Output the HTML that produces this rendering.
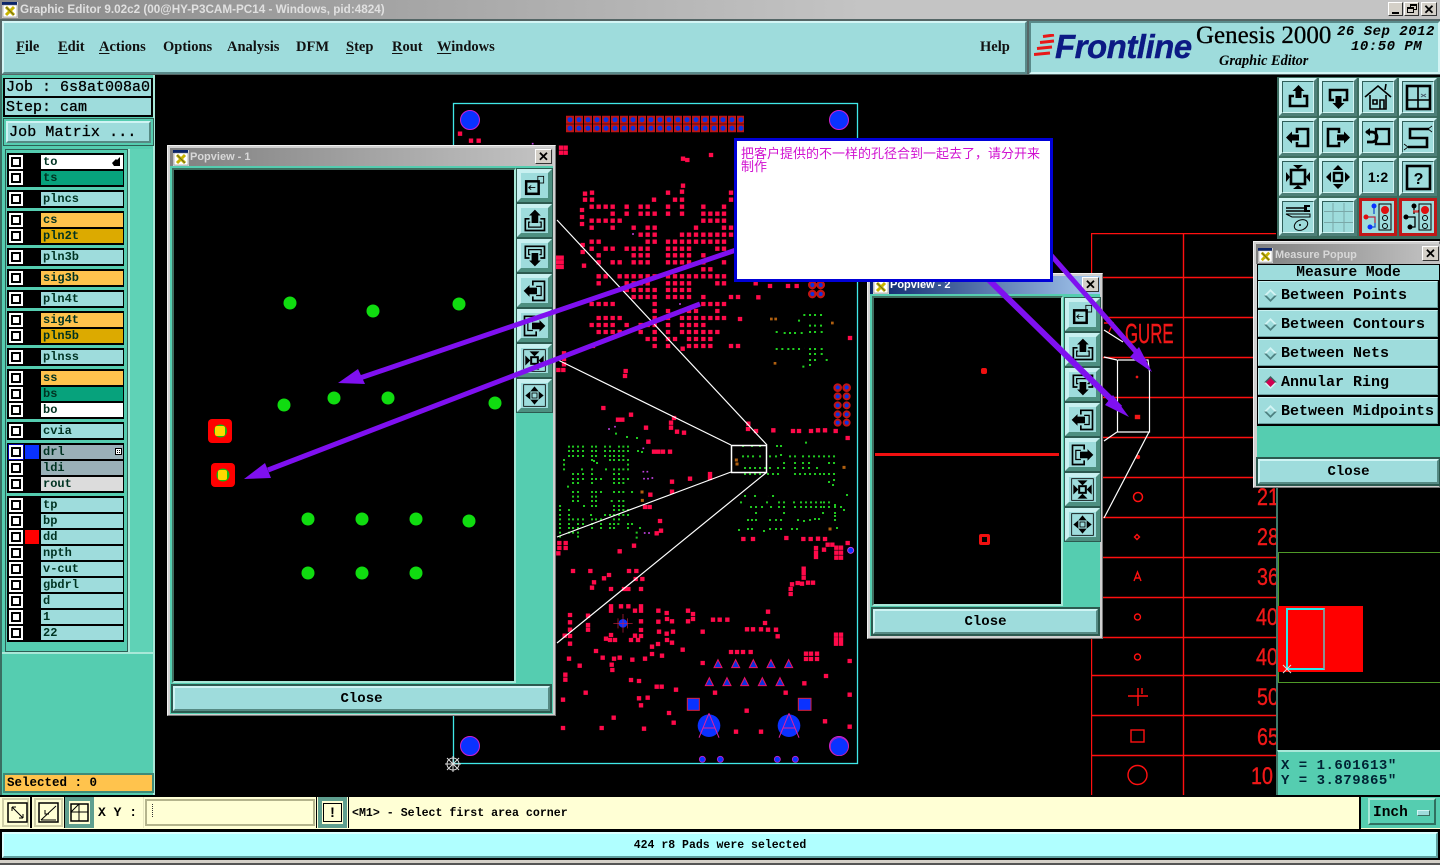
<!DOCTYPE html>
<html><head><meta charset="utf-8"><title>Graphic Editor</title>
<style>
html,body{margin:0;padding:0;background:#000}
#r{position:relative;width:1440px;height:865px;overflow:hidden;background:#000;font-family:"Liberation Mono",monospace;color:#000}
#r div,#r span,#r svg{position:absolute;box-sizing:border-box}
.b{background:#9edcdc;border:2px solid;border-color:#cff4f4 #568a84 #568a84 #cff4f4}
.m{font:bold 14.5px/18px "Liberation Serif",serif;top:38px;white-space:nowrap;color:#111}
.m u{text-underline-offset:2px}
.t{font:bold 15px/18px "Liberation Mono",monospace;white-space:pre}
.lb{background:#000;left:7px;width:117px}
.ck{left:9px;width:14px;height:14px;background:#fff}
.ck:after{content:"";position:absolute;left:2px;top:2px;width:10px;height:10px;border:2px solid #000;background:#fff;box-sizing:border-box}
.c{left:41px;width:82px;height:14px;background:#9edcdc;font:bold 12px/15px "Liberation Mono",monospace;padding-left:2px;color:#032}
.o{background:#ffc34d}.d{background:#dcaa00}.g{background:#07a27c}.w{background:#fff}.s{background:#9ab0b8}.y{background:#dcdcdc}
.tool{width:38px;height:38px;background:#9edcdc;border:3px solid;border-color:#d3f5f5 #4d7f78 #4d7f78 #d3f5f5}
.tool:before{content:"";position:absolute;left:0;top:0;width:32px;height:32px;border:1px solid;border-color:#2f5f5a #d3f5f5 #d3f5f5 #2f5f5a;box-sizing:border-box}
.tool svg{left:1px;top:1px;width:30px;height:30px}
.pop{background:#d0d0d0;border:1px solid #f0f0f0;border-right-color:#777;border-bottom-color:#777}
.ti{font:bold 11px/16px "Liberation Sans",sans-serif;color:#d8d8d8;white-space:nowrap}
.x{width:17px;height:15px;background:#d4d0c8;border:1px solid;border-color:#fff #333 #333 #fff;font:bold 13px/13px "Liberation Sans",sans-serif;text-align:center;color:#000}
.pb{width:35px;height:33px;background:#9edcdc;border:4px solid;border-color:#c8f0f0 #4d8f80 #4d8f80 #c8f0f0;outline:1px solid #2c5a50}
.pb svg{left:1px;top:0;width:25px;height:25px}
.row{left:1258px;width:180px;height:27px;background:#9edcdc;border:1px solid;border-color:#c8f0f0 #6ba0a0 #6ba0a0 #c8f0f0}
.row svg{left:4px;top:6px;width:15px;height:15px}
.row span{left:22px;top:5px}
</style></head><body>
<div id="r">

<svg width="0" height="0" style="left:0;top:0">
<defs>
<symbol id="up" viewBox="0 0 30 30"><path d="M11 14H7v10h17V14h-4" fill="none" stroke="#000" stroke-width="2.600"/><path d="M15.500 3l6 6h-3v7h-6V9h-3z"/></symbol>
<symbol id="dn" viewBox="0 0 30 30"><path d="M11 18H7V8h17v10h-4" fill="none" stroke="#000" stroke-width="2.600"/><path d="M15.500 27l-6-6h3v-7h6v7h3z"/></symbol>
<symbol id="lf" viewBox="0 0 30 30"><path d="M14 11V7h11v17H14v-4" fill="none" stroke="#000" stroke-width="2.600"/><path d="M3 15.500l6-6v3h7v6H9v3z"/></symbol>
<symbol id="rt" viewBox="0 0 30 30"><path d="M16 11V7H5v17h11v-4" fill="none" stroke="#000" stroke-width="2.600"/><path d="M27 15.500l-6-6v3h-7v6h7v3z"/></symbol>
<symbol id="fit" viewBox="0 0 30 30"><rect x="8" y="8" width="14" height="14" fill="none" stroke="#000" stroke-width="2.600"/><path d="M15 7l-5-4h10zM15 23l-5 4h10zM7 15l-4-5v10zM23 15l4-5v10z"/></symbol>
<symbol id="pan" viewBox="0 0 30 30"><rect x="11" y="11" width="8" height="8" fill="none" stroke="#000" stroke-width="2.400"/><path d="M15 3l5 5H10zM15 27l5-5H10zM3 15l5-5v10zM27 15l-5-5v10z"/></symbol>
<symbol id="back" viewBox="0 0 30 30"><rect x="5" y="10" width="15" height="15" fill="none" stroke="#000" stroke-width="3"/><path d="M16 17.500H9M11 15l-3 2.500 3 2.500" fill="none" stroke="#000"/><rect x="19" y="4" width="7" height="8" fill="none" stroke="#000"/></symbol>
<symbol id="pup" viewBox="0 0 30 30"><path d="M9 13H4v14h23V13h-5" fill="none" stroke="#000" stroke-width="2"/><path d="M10 17H8v6h15v-6h-2" fill="none" stroke="#000" stroke-width="1.500"/><path d="M15.500 2l7 7h-3v9h-8V9h-3z"/></symbol>
<symbol id="pdn" viewBox="0 0 30 30"><path d="M9 18H4V4h23v14h-5" fill="none" stroke="#000" stroke-width="2"/><path d="M10 14H8V8h15v6h-2" fill="none" stroke="#000" stroke-width="1.500"/><path d="M15.500 28l-7-7h3v-9h8v9h3z"/></symbol>
<symbol id="plf" viewBox="0 0 30 30"><path d="M13 9V4h14v23H13v-5" fill="none" stroke="#000" stroke-width="2"/><path d="M17 10h6v11h-6" fill="none" stroke="#000" stroke-width="1.500"/><path d="M2 15.500l7-7v3h9v8H9v3z"/></symbol>
<symbol id="prt" viewBox="0 0 30 30"><path d="M17 9V4H3v23h14v-5" fill="none" stroke="#000" stroke-width="2"/><path d="M13 10H7v11h6" fill="none" stroke="#000" stroke-width="1.500"/><path d="M28 15.500l-7-7v3h-9v8h9v3z"/></symbol>
<symbol id="pfit" viewBox="0 0 30 30"><rect x="2" y="2" width="26" height="26" fill="none" stroke="#000"/><rect x="11" y="11" width="8" height="8" fill="none" stroke="#000" stroke-width="2.400"/><path d="M15 10l-6-6h12zM15 20l-6 6h12zM10 15l-6-6v12zM20 15l6-6v12z"/></symbol>
<symbol id="ppan" viewBox="0 0 30 30"><rect x="2" y="2" width="26" height="26" fill="none" stroke="#000"/><rect x="12" y="12" width="6" height="6" fill="none" stroke="#000"/><path d="M15 4l5 6H10zM15 26l5-6H10zM4 15l6-5v10zM26 15l-6-5v10z"/></symbol>
<symbol id="xi" viewBox="0 0 16 16"><rect width="16" height="16" fill="#d8d8d8"/><rect width="15" height="3" fill="#0a246a"/><rect x="1" y="3" width="14" height="12" fill="#fff" stroke="#777" stroke-width=".5"/><path d="M4 5l8 8M12 5l-8 8" stroke="#c8b400" stroke-width="3"/><path d="M4 5l8 8" stroke="#6a6a20"/></symbol>
<symbol id="dia" viewBox="0 0 15 15"><path d="M7.500 1L14 7.500H1z" fill="#d4f4f4"/><path d="M1 7.500L7.500 14 14 7.500z" fill="#4d8080"/><path d="M7.500 3.500l4 4-4 4-4-4z" fill="#9edcdc"/></symbol>
</defs></svg>

<!-- Title bar -->
<div style="left:0;top:0;width:1440px;height:19px;background:linear-gradient(90deg,#8a8a8a,#c4c4c4 60%,#c4c4c4)"></div>
<svg style="left:2px;top:2px;width:16px;height:16px"><use href="#xi"/></svg>
<div style="left:20px;top:2px;font:bold 11.7px/16px 'Liberation Sans',sans-serif;color:#e0e0e0;white-space:nowrap">Graphic Editor 9.02c2 (00@HY-P3CAM-PC14 - Windows, pid:4824)</div>
<div class="x" style="left:1388px;top:2px;width:15px;height:14px"><span style="left:3px;top:9px;width:7px;height:2px;background:#000"></span></div>
<div class="x" style="left:1404px;top:2px;width:15px;height:14px"><span style="left:5px;top:1px;width:7px;height:6px;border:1px solid #000;border-top-width:2px"></span><span style="left:2px;top:4px;width:7px;height:6px;border:1px solid #000;border-top-width:2px;background:#d4d0c8"></span></div>
<div class="x" style="left:1421px;top:2px;width:16px;height:14px">✕</div>

<!-- Menu -->
<div style="left:0;top:19px;width:1440px;height:56px;background:#566"></div>
<div class="b" style="left:2px;top:21px;width:1025px;height:53px;border-color:#d3f5f5 #5a8a8a #5a8a8a #d3f5f5"></div>
<div class="b" style="left:1029px;top:21px;width:411px;height:53px;border-color:#5a8a8a #d3f5f5 #d3f5f5 #5a8a8a"></div>
<div class="m" style="left:16px"><u>F</u>ile</div>
<div class="m" style="left:58px"><u>E</u>dit</div>
<div class="m" style="left:99px"><u>A</u>ctions</div>
<div class="m" style="left:163px">Options</div>
<div class="m" style="left:227px">Analysis</div>
<div class="m" style="left:296px">DFM</div>
<div class="m" style="left:346px"><u>S</u>tep</div>
<div class="m" style="left:392px"><u>R</u>out</div>
<div class="m" style="left:437px"><u>W</u>indows</div>
<div class="m" style="left:980px">Help</div>

<!-- Logo -->
<svg style="left:1034px;top:34px;width:24px;height:26px"><path d="M9 2.500L20 1M6 8.500L20 7M3 14.500L18 13M0 20.500L16 19" stroke="#e81818" stroke-width="3"/></svg>
<div style="left:1055px;top:27px;font:italic bold 33px/40px 'Liberation Sans',sans-serif;color:#0c1a84;letter-spacing:-.5px;white-space:nowrap;-webkit-text-stroke:.4px #0c1a84">Frontline</div>
<div style="left:1196px;top:20px;font:25px/32px 'Liberation Serif',serif;white-space:nowrap;-webkit-text-stroke:.3px #000">Genesis 2000</div>
<div style="left:1219px;top:53px;font:italic bold 14.3px/16px 'Liberation Serif',serif;white-space:nowrap">Graphic Editor</div>
<div style="left:1337px;top:24px;font:italic bold 14px/17px 'Liberation Mono',monospace;white-space:pre;letter-spacing:.5px">26 Sep 2012</div>
<div style="left:1351px;top:39px;font:italic bold 14px/17px 'Liberation Mono',monospace;white-space:pre;letter-spacing:.5px">10:50 PM</div>

<!-- Left panel -->
<div style="left:0;top:75px;width:155px;height:722px;background:#55cdb0;border-right:2px solid #a8e8d8;border-left:2px solid #3a6e62"></div>
<div style="left:3px;top:78px;width:150px;height:39px;background:#000"></div>
<div style="left:5px;top:79px;width:146px;height:17px;background:#9edcdc"></div>
<div style="left:5px;top:98px;width:146px;height:17px;background:#9edcdc"></div>
<div class="t" style="left:6px;top:79px;line-height:17px;font-weight:normal;-webkit-text-stroke:.3px #000">Job : 6s8at008a0</div>
<div class="t" style="left:6px;top:99px;line-height:17px;font-weight:normal;-webkit-text-stroke:.3px #000">Step: cam</div>
<div style="left:3px;top:118px;width:151px;height:28px;background:#55cdb0;border:1px solid #2e5e54"></div>
<div class="b" style="left:6px;top:121px;width:145px;height:22px"></div>
<div class="t" style="left:9px;top:124px;letter-spacing:.1px;font-weight:normal;-webkit-text-stroke:.3px #000">Job Matrix ...</div>
<div style="left:5px;top:149px;width:123px;height:503px;background:#55cdb0;border:1px solid #2e5e54"></div>
<div style="left:128px;top:149px;width:24px;height:503px;background:#5fd2b6;border-left:2px solid #a8e8d8"></div>
<div style="left:2px;top:652px;width:151px;height:2px;background:#a8e8d8"></div>

<!-- Layer groups -->
<div class="lb" style="top:153px;height:34px"></div>
<div class="lb" style="top:190px;height:18px"></div>
<div class="lb" style="top:211px;height:34px"></div>
<div class="lb" style="top:248px;height:18px"></div>
<div class="lb" style="top:269px;height:18px"></div>
<div class="lb" style="top:290px;height:18px"></div>
<div class="lb" style="top:311px;height:34px"></div>
<div class="lb" style="top:348px;height:18px"></div>
<div class="lb" style="top:369px;height:50px"></div>
<div class="lb" style="top:422px;height:18px"></div>
<div class="lb" style="top:443px;height:50px"></div>
<div class="lb" style="top:496px;height:146px"></div>

<div class="ck" style="top:155px"></div><div class="c w" style="top:155px">to<svg style="left:70px;top:2px;width:10px;height:10px"><path d="M1 6l4-4 1 1 3-3v9H3z"/></svg></div>
<div class="ck" style="top:171px"></div><div class="c g" style="top:171px">ts</div>
<div class="ck" style="top:192px"></div><div class="c" style="top:192px">plncs</div>
<div class="ck" style="top:213px"></div><div class="c o" style="top:213px">cs</div>
<div class="ck" style="top:229px"></div><div class="c d" style="top:229px">pln2t</div>
<div class="ck" style="top:250px"></div><div class="c" style="top:250px">pln3b</div>
<div class="ck" style="top:271px"></div><div class="c o" style="top:271px">sig3b</div>
<div class="ck" style="top:292px"></div><div class="c" style="top:292px">pln4t</div>
<div class="ck" style="top:313px"></div><div class="c o" style="top:313px">sig4t</div>
<div class="ck" style="top:329px"></div><div class="c d" style="top:329px">pln5b</div>
<div class="ck" style="top:350px"></div><div class="c" style="top:350px">plnss</div>
<div class="ck" style="top:371px"></div><div class="c o" style="top:371px">ss</div>
<div class="ck" style="top:387px"></div><div class="c g" style="top:387px">bs</div>
<div class="ck" style="top:403px"></div><div class="c w" style="top:403px">bo</div>
<div class="ck" style="top:424px"></div><div class="c" style="top:424px">cvia</div>
<div style="left:8px;top:444px;width:16px;height:16px;background:#0000a8"></div>
<div class="ck" style="top:445px"></div>
<div style="left:25px;top:445px;width:14px;height:14px;background:#0a32ff"></div>
<div class="c s" style="top:445px">drl<svg style="left:74px;top:3px;width:7px;height:7px"><rect x=".5" y=".5" width="6" height="6" fill="#fff" stroke="#000"/><path d="M2 2h1v1H2zM4 2h1v1H4zM2 4h1v1H2zM4 4h1v1H4z"/></svg></div>
<div class="ck" style="top:461px"></div><div class="c s" style="top:461px">ldi</div>
<div class="ck" style="top:477px"></div><div class="c y" style="top:477px">rout</div>
<div class="ck" style="top:498px"></div><div class="c" style="top:498px">tp</div>
<div class="ck" style="top:514px"></div><div class="c" style="top:514px">bp</div>
<div class="ck" style="top:530px"></div><div style="left:25px;top:530px;width:14px;height:14px;background:#f00"></div><div class="c" style="top:530px">dd</div>
<div class="ck" style="top:546px"></div><div class="c" style="top:546px">npth</div>
<div class="ck" style="top:562px"></div><div class="c" style="top:562px">v-cut</div>
<div class="ck" style="top:578px"></div><div class="c" style="top:578px">gbdrl</div>
<div class="ck" style="top:594px"></div><div class="c" style="top:594px">d</div>
<div class="ck" style="top:610px"></div><div class="c" style="top:610px">1</div>
<div class="ck" style="top:626px"></div><div class="c" style="top:626px">22</div>

<div style="left:3px;top:773px;width:151px;height:20px;background:#ffc34d;border:2px solid #3f8a78;font:bold 12.5px/16px 'Liberation Mono',monospace;padding-left:2px;white-space:pre">Selected : 0</div>

<!-- Canvas -->
<svg style="left:155px;top:75px;width:1122px;height:722px" viewBox="155 75 1122 722">
<defs><clipPath id="cl"><rect x="1091" y="233" width="185" height="562"/></clipPath></defs>
<rect x="453.500" y="103.500" width="404" height="660" fill="none" stroke="#40e8e8" stroke-width="1.300"/>
<g fill="#0a32ff" stroke="#d020d0" stroke-width="1">
<circle cx="470" cy="120" r="9.500"/><circle cx="839" cy="120" r="9.500"/><circle cx="470" cy="746" r="9.500"/><circle cx="839" cy="746" r="9.500"/>
</g>
<!-- top connector -->
<path d="M566 119.700H744M566 128.300H744" stroke="#c01414" stroke-width="8" stroke-dasharray="8 1"/>
<path d="M570 119.700H742M570 128.300H742" stroke="#0a32e0" stroke-width="5" stroke-dasharray="0 9" stroke-linecap="round"/>
<!-- zoom8 pads -->
<g transform="translate(450,95) scale(.33333)" fill="none">
<path stroke="#ff0a4a" stroke-width="13" stroke-linecap="square" d="M425 335h.1M446 335h.1M467 335h.1M488 335h.1M530 335h.1M572 335h.1M593 335h.1M612 314h.1M654 335h.1M696 335h.1M760 335h.1M822 335h.1
M488 356h.1M530 356h.1M572 356h.1M593 356h.1M614 356h.1M654 356h.1M696 356h.1M760 356h.1M781 356h.1M802 356h.1M822 356h.1
M425 377h.1M446 377h.1M467 377h.1M488 377h.1M509 377h.1M760 377h.1M781 377h.1M802 377h.1M822 377h.1
M425 398h.1M488 398h.1M551 398h.1M593 398h.1M614 398h.1M738 398h.1M822 398h.1M843 398h.1
M572 419h.1M593 419h.1M614 419h.1M696 419h.1M717 419h.1M738 419h.1M760 419h.1M781 419h.1M802 419h.1M822 419h.1M843 419h.1
M425 440h.1M446 440h.1M593 440h.1M614 440h.1M654 440h.1M675 440h.1M696 440h.1M717 440h.1M738 440h.1M760 440h.1M781 440h.1M802 440h.1M822 440h.1
M425 461h.1M467 461h.1M488 461h.1M530 461h.1M551 461h.1M572 461h.1M593 461h.1M654 461h.1M675 461h.1M696 461h.1M717 461h.1M802 461h.1M822 461h.1
M446 481h.1M551 481h.1M572 481h.1M593 481h.1M654 481h.1M675 481h.1M696 481h.1M717 481h.1M760 481h.1
M446 502h.1M488 502h.1M509 502h.1M551 502h.1M572 502h.1M593 502h.1M654 502h.1M675 502h.1M696 502h.1M717 502h.1M760 502h.1M822 502h.1
M760 523h.1M781 523h.1
M446 544h.1M467 544h.1M509 544h.1M530 544h.1M551 544h.1M572 544h.1M593 544h.1M614 544h.1M654 544h.1M675 544h.1M696 544h.1M717 544h.1M738 544h.1M760 544h.1M781 544h.1M802 544h.1M822 544h.1
M446 565h.1M530 565h.1M551 565h.1M572 565h.1M593 565h.1M654 565h.1M675 565h.1M696 565h.1M717 565h.1M802 565h.1M822 565h.1
M530 585h.1M551 585h.1M572 585h.1M593 585h.1M614 585h.1M654 585h.1M675 585h.1M696 585h.1M717 585h.1
M551 606h.1M572 606h.1M593 606h.1M614 606h.1M654 606h.1M675 606h.1M696 606h.1M717 606h.1M760 606h.1M843 606h.1M864 606h.1
M425 627h.1M446 627h.1M467 627h.1M488 627h.1M614 627h.1M760 627h.1M781 627h.1M802 627h.1M822 627h.1
M614 648h.1M654 648h.1M696 648h.1M717 648h.1M738 648h.1M802 648h.1
M446 669h.1M467 669h.1M488 669h.1M509 669h.1M614 669h.1M654 669h.1M696 669h.1M717 669h.1M738 669h.1M760 669h.1M781 669h.1M802 669h.1M822 669h.1
M425 690h.1M446 690h.1M467 690h.1M488 690h.1M530 690h.1M572 690h.1M593 690h.1M614 690h.1M654 690h.1M696 690h.1M717 690h.1M738 690h.1M760 690h.1
M446 711h.1M467 711h.1M488 711h.1M509 711h.1M572 711h.1M614 711h.1M654 711h.1M696 711h.1M717 711h.1M738 711h.1M760 711h.1M781 711h.1M802 711h.1
M593 732h.1M614 732h.1M654 732h.1M675 732h.1M717 732h.1M738 732h.1M760 732h.1M781 732h.1
M614 753h.1M654 753h.1M717 753h.1M738 753h.1M760 753h.1M781 753h.1M843 753h.1M864 753h.1
M870 672h.1M925 607h.1M917 565h.1M960 573h.1M1014 573h.1M1040 573h.1M1200 729h.1
M30 116h.1M63 137h.1M86 137h.1M333 158h.1M347 158h.1M333 173h.1M347 173h.1M699 191h.1M712 195h.1M783 180h.1M699 272h.1M696 290h.1M405 296h.1M426 293h.1M405 314h.1M426 314h.1M654 293h.1M675 314h.1M696 314h.1M843 293h.1M843 314h.1M396 345h.1M396 366h.1M396 387h.1M398 450h.1M398 471h.1M402 512h.1M323 488h.1M335 488h.1M323 502h.1M335 502h.1M323 516h.1M335 516h.1M342 775h.1M342 792h.1M342 808h.1M325 825h.1M340 825h.1M527 828h.1M525 843h.1M698 761h.1M429 753h.1"/>
<path stroke="#20d020" stroke-width="6" stroke-linecap="square" d="M1063 660h.1M1080 660h.1M1095 660h.1M1113 660h.1M1047 677h.1M1080 692h.1M1095 692h.1M1113 692h.1M980 711h.1M1004 714h.1M1020 714h.1M1035 714h.1M1055 714h.1M1080 711h.1M1095 711h.1M1115 711h.1M980 762h.1M997 762h.1M1015 762h.1M1030 762h.1M1047 762h.1M1080 762h.1M1095 762h.1M1115 762h.1M1080 777h.1M1095 777h.1M1115 777h.1M1080 795h.1M1095 795h.1M1130 795h.1M1080 810h.1M1060 815h.1"/>
<path stroke="#b06010" stroke-width="8" stroke-linecap="square" d="M964 672h.1M977 672h.1M975 805h.1M1147 684h.1"/>
<path stroke="#e8d020" stroke-width="5" d="M1080 677h.1M1115 692h.1M1064 760h.1"/>
<path stroke="#c040e0" stroke-width="5" stroke-linecap="square" d="M248 146h.1M549 417h.1M690 627h.1"/>
<path stroke="#c01414" stroke-width="26" stroke-linecap="round" d="M1087 570h.1M1112 570h.1M1087 597h.1M1112 597h.1M1163 878h.1M1190 878h.1"/>
<path stroke="#0a32e0" stroke-width="12" stroke-linecap="round" d="M1087 570h.1M1112 570h.1M1087 597h.1M1112 597h.1M1163 878h.1M1190 878h.1"/>
</g>
<!-- zoom9 -->
<g transform="translate(550,380) scale(.33333)" fill="none">
<path stroke="#ff0a4a" stroke-width="13" stroke-linecap="square" d="M160 84h.1M243 104h.1M204 119h.1M217 119h.1M288 143h.1M363 128h.1M363 143h.1M372 114h.1M381 155h.1M402 158h.1M595 131h.1M594 147h.1M618 153h.1M670 151h.1M729 153h.1M747 153h.1M783 153h.1M804 151h.1M825 151h.1M857 153h.1M893 174h.1M295 185h.1M312 215h.1M325 215h.1M339 215h.1M360 215h.1M480 282h.1M480 294h.1M420 296h.1M366 305h.1M366 335h.1M301 344h.1M285 381h.1M299 381h.1M330 423h.1M333 452h.1M320 460h.1M252 497h.1M209 514h.1M580 477h.1M609 477h.1M709 474h.1M760 477h.1M782 477h.1M804 476h.1M825 477h.1M833 494h.1M847 494h.1M859 503h.1M873 503h.1M859 518h.1M873 518h.1M859 533h.1M873 533h.1M798 504h.1M798 518h.1M798 531h.1M822 509h.1M893 489h.1M28 489h.1M47 489h.1M28 504h.1M47 504h.1M25 520h.1M69 573h.1M121 573h.1M177 585h.1M162 595h.1M132 607h.1M126 623h.1M183 627h.1M237 573h.1M259 573h.1M277 597h.1M235 627h.1M273 627h.1M257 597h.1M222 627h.1M761 566h.1M761 579h.1M761 593h.1M726 613h.1M743 609h.1M756 611h.1M774 608h.1M789 608h.1M722 627h.1M722 642h.1M183 679h.1M213 679h.1M235 679h.1M273 679h.1M183 692h.1M255 692h.1M273 692h.1M325 692h.1M350 699h.1M351 717h.1M366 724h.1M414 692h.1M429 702h.1M429 717h.1M414 724h.1M489 719h.1M509 719h.1M532 719h.1M654 695h.1M645 729h.1M591 748h.1M609 748h.1M633 748h.1M654 749h.1M678 749h.1M683 769h.1M60 705h.1M114 707h.1M60 727h.1M114 735h.1M114 749h.1M60 749h.1M60 768h.1M44 767h.1M60 791h.1M273 724h.1M325 725h.1M273 750h.1M327 755h.1M369 755h.1M350 761h.1M183 765h.1M255 767h.1M273 768h.1M168 776h.1M180 780h.1M195 780h.1M243 780h.1M264 780h.1M351 780h.1M366 788h.1M324 792h.1M306 800h.1M306 822h.1M336 827h.1M398 809h.1M458 755h.1M138 813h.1M158 833h.1M192 836h.1M209 833h.1M247 839h.1M285 836h.1M57 836h.1M89 857h.1M185 854h.1M187 870h.1M46 884h.1M46 899h.1M243 900h.1M267 903h.1M320 920h.1M335 920h.1M378 929h.1M107 938h.1M39 959h.1M267 955h.1M293 953h.1M273 976h.1M357 999h.1M371 1028h.1M191 1013h.1M39 1044h.1M155 1044h.1M282 1046h.1M458 849h.1M543 816h.1M561 816h.1M579 816h.1M602 816h.1M495 938h.1M590 992h.1M558 1055h.1M633 1055h.1M707 938h.1M763 910h.1M828 888h.1M899 843h.1M899 944h.1M825 1024h.1M899 1040h.1M768 821h.1M783 821h.1M801 821h.1M768 837h.1M783 837h.1M801 837h.1M858 764h.1M873 764h.1M858 778h.1M873 778h.1M858 791h.1M873 791h.1"/>
<path stroke="#20c820" stroke-width="6" stroke-linecap="square" d="M57 200h.1M69 200h.1M84 200h.1M99 200h.1M126 200h.1M138 200h.1M165 200h.1M180 200h.1M207 200h.1M220 200h.1M234 200h.1M231 171h.1M261 174h.1M198 161h.1M57 213h.1M69 213h.1M84 213h.1M99 213h.1M126 213h.1M138 213h.1M165 213h.1M180 213h.1M192 213h.1M207 213h.1M220 213h.1M234 213h.1M264 213h.1M276 216h.1M57 228h.1M69 228h.1M84 228h.1M99 228h.1M126 228h.1M138 228h.1M165 228h.1M180 228h.1M192 228h.1M207 228h.1M220 228h.1M42 240h.1M126 240h.1M132 243h.1M180 240h.1M192 240h.1M207 240h.1M220 240h.1M234 240h.1M42 254h.1M141 249h.1M234 254h.1M42 268h.1M96 268h.1M126 268h.1M168 268h.1M192 268h.1M207 268h.1M220 268h.1M234 268h.1M69 282h.1M84 282h.1M99 282h.1M126 282h.1M192 282h.1M207 282h.1M69 297h.1M84 297h.1M99 297h.1M126 297h.1M138 297h.1M153 297h.1M192 297h.1M207 297h.1M220 297h.1M234 297h.1M69 309h.1M84 309h.1M126 309h.1M192 309h.1M207 309h.1M220 309h.1M54 320h.1M69 336h.1M84 336h.1M126 336h.1M138 336h.1M153 336h.1M192 336h.1M207 336h.1M220 336h.1M246 336h.1M69 350h.1M84 350h.1M126 350h.1M138 350h.1M69 363h.1M84 363h.1M126 363h.1M138 363h.1M185 363h.1M207 363h.1M220 363h.1M30 378h.1M102 378h.1M126 378h.1M138 378h.1M192 378h.1M207 378h.1M220 378h.1M30 390h.1M57 390h.1M192 390h.1M207 390h.1M220 390h.1M234 390h.1M30 405h.1M57 405h.1M123 405h.1M165 405h.1M180 405h.1M192 405h.1M207 405h.1M220 405h.1M234 405h.1M30 418h.1M57 418h.1M69 418h.1M84 418h.1M99 418h.1M126 418h.1M138 418h.1M153 418h.1M192 418h.1M207 418h.1M30 432h.1M57 432h.1M84 432h.1M99 432h.1M126 432h.1M153 432h.1M180 432h.1M192 432h.1M205 432h.1M234 432h.1M246 432h.1M30 444h.1M57 444h.1M69 444h.1M84 444h.1M126 444h.1M153 444h.1M180 444h.1M192 444h.1M234 444h.1M270 444h.1M30 458h.1M57 458h.1M69 458h.1M84 458h.1M260 458h.1M30 470h.1M84 470h.1M260 473h.1
M579 198h.1M606 198h.1M630 198h.1M681 198h.1M693 198h.1M768 188h.1M579 229h.1M594 229h.1M609 229h.1M630 229h.1M660 229h.1M678 229h.1M693 225h.1M720 229h.1M735 229h.1M759 229h.1M777 229h.1M792 229h.1M807 229h.1M822 229h.1M837 229h.1M852 229h.1M702 249h.1M735 249h.1M759 249h.1M777 249h.1M837 249h.1M852 249h.1M585 264h.1M600 264h.1M615 264h.1M630 264h.1M645 264h.1M660 264h.1M684 264h.1M702 264h.1M735 264h.1M759 264h.1M777 264h.1M801 264h.1M585 282h.1M600 282h.1M615 282h.1M630 282h.1M654 282h.1M669 282h.1M684 282h.1M735 282h.1M750 282h.1M765 282h.1M780 282h.1M795 282h.1M810 282h.1M822 282h.1M837 282h.1M852 282h.1M852 300h.1M837 306h.1M849 315h.1M891 345h.1M585 348h.1M615 348h.1M669 348h.1M573 367h.1M651 367h.1M687 367h.1M702 367h.1M732 367h.1M753 367h.1M768 367h.1M783 367h.1M798 367h.1M813 367h.1M822 367h.1M837 367h.1M855 375h.1M603 381h.1M618 381h.1M636 381h.1M663 381h.1M687 381h.1M702 381h.1M735 381h.1M753 381h.1M768 381h.1M783 381h.1M798 381h.1M813 381h.1M822 381h.1M837 381h.1M855 381h.1M873 381h.1M618 399h.1M702 399h.1M819 399h.1M855 399h.1M882 390h.1M594 420h.1M606 420h.1M618 420h.1M660 420h.1M678 420h.1M693 420h.1M744 420h.1M762 423h.1M780 420h.1M795 417h.1M807 417h.1M855 408h.1M567 450h.1M594 447h.1M606 447h.1M642 453h.1M660 447h.1M678 447h.1M693 447h.1M726 447h.1M741 447h.1M855 420h.1M861 444h.1"/>
<path stroke="#c040e0" stroke-width="5" stroke-linecap="square" d="M177 147h.1M195 140h.1M280 205h.1M280 275h.1M292 275h.1M282 296h.1M294 296h.1M307 294h.1M284 459h.1M297 459h.1"/>
<path stroke="#b06010" stroke-width="9" stroke-linecap="square" d="M276 336h.1M277 361h.1M882 262h.1M840 447h.1M559 240h.1M561 252h.1"/>
<path stroke="#f0e040" stroke-width="4" d="M654 349h.1M858 281h.1M660 449h.1"/>
<g stroke="#c01414" stroke-width="24" stroke-linecap="round"><path d="M863 22h.1M890 22h.1M863 49h.1M890 49h.1M863 76h.1M890 76h.1M863 103h.1M890 103h.1M863 128h.1M890 128h.1"/></g>
<path stroke="#0a32e0" stroke-width="12" stroke-linecap="round" d="M863 22h.1M890 22h.1M863 49h.1M890 49h.1M863 76h.1M890 76h.1M863 103h.1M890 103h.1M863 128h.1M890 128h.1"/>
<!-- triangles -->
<g fill="#0a32e0" stroke="#f01060" stroke-width="3"><path d="M504 839l12 24h-24zM557 839l12 24h-24zM610 839l12 24h-24zM663 839l12 24h-24zM716 839l12 24h-24zM478 893l12 24h-24zM531 893l12 24h-24zM584 893l12 24h-24zM637 893l12 24h-24zM690 893l12 24h-24z"/></g>
<g fill="#0a32ff" stroke="none"><circle cx="477" cy="1037" r="34"/><circle cx="717" cy="1037" r="34"/></g>
<path d="M477 1000l-30 73M477 1000l30 73M458 1044h38M717 1000l-30 73M717 1000l30 73M698 1044h38" stroke="#e020a0" stroke-width="3"/>
<rect x="412" y="955" width="36" height="36" fill="#0a32ff" stroke="#d82040" stroke-width="3"/>
<rect x="745" y="955" width="38" height="36" fill="#0a32ff" stroke="#d82040" stroke-width="3"/>
<circle cx="868" cy="1100" r="27" fill="#0a32ff" stroke="#e020a0" stroke-width="2"/>
<g stroke="#c020d0" stroke-width="2.500" fill="#0a32ff"><circle cx="457" cy="1138" r="9"/><circle cx="511" cy="1138" r="9"/><circle cx="682" cy="1138" r="9"/><circle cx="736" cy="1138" r="9"/></g>
<circle cx="219" cy="730" r="13" fill="#0a32ff"/><path d="M190 730h58M219 702v56M204 715v30M233 715v30" stroke="#d02040" stroke-width="2"/>
<circle cx="902" cy="511" r="9" fill="#0a32ff" stroke="#c040e0" stroke-width="3"/>
</g>
<!-- white lines -->
<g stroke="#fff" fill="none" stroke-width="1.200">
<rect x="731.500" y="445.500" width="35" height="27" stroke-width="1.500"/>
<path d="M557 220L767 445M558 360L731 445M557 537L731 472M557 643L767 472"/>
</g>
<!-- Table -->
<g stroke="#ff1010" stroke-width="1.400" fill="none" clip-path="url(#cl)">
<path d="M1091.500 233V795M1183.500 233V795M1091 233.500H1276M1091 277.500H1276M1091 317.500H1276M1091 357.500H1276M1091 397.500H1276M1091 437.500H1276M1091 477.500H1276M1091 517.500H1276M1091 557.500H1276M1091 597.500H1276M1091 637.500H1276M1091 675.500H1276M1091 715.500H1276M1091 755.500H1276"/>
<circle cx="1138" cy="497" r="4.500" stroke-width="1.500"/>
<circle cx="1137.500" cy="617" r="3"/><circle cx="1137.500" cy="657" r="3"/>
<circle cx="1137.500" cy="775" r="9.500"/>
<rect x="1131" y="730" width="13" height="12"/>
<path d="M1128 696h20M1138 688v18M1142 688v6M1134 581l3.500-9 3.500 9M1135 578h5M1134.500 537l2.500-2.500 2.500 2.500-2.500 2.500z"/>
<path d="M1104 323h9l-4 9"/>
</g>
<g fill="#f01818" stroke="#f01818" stroke-width=".4" clip-path="url(#cl)" font-family="Liberation Sans">
<text font-size="28" transform="translate(1125,343) scale(.6,1)">GURE</text>
<text font-size="24" transform="translate(1257,505) scale(.82,1)">21</text>
<text font-size="24" transform="translate(1257,545) scale(.82,1)">28</text>
<text font-size="24" transform="translate(1257,585) scale(.82,1)">36</text>
<text font-size="24" transform="translate(1256,625) scale(.82,1)">40</text>
<text font-size="24" transform="translate(1256,665) scale(.82,1)">40</text>
<text font-size="24" transform="translate(1257,705) scale(.82,1)">50</text>
<text font-size="24" transform="translate(1257,745) scale(.82,1)">65</text>
<text font-size="24" transform="translate(1251,784) scale(.82,1)">10</text>
<circle cx="1137" cy="377" r="1.200"/><rect x="1135" y="415" width="5" height="4"/><circle cx="1138" cy="457" r="2"/>
</g>
<g stroke="#fff" fill="none" stroke-width="1.200"><path d="M1117.500 360H1148L1149.500 372V432H1117.500V360M1104 330L1123 342M1104 357L1117 360M1104 441L1117 432M1104 518L1149 432"/></g>
<!-- mouse cross -->
<g stroke="#ddd" fill="none"><circle cx="453" cy="764" r="6"/><path d="M445 764h16M453 756v16M447 758l12 12M459 758l-12 12"/></g>
</svg>

<!-- Tool grid -->
<div style="left:1277px;top:77px;width:163px;height:162px;background:#3c6d60"></div>
<div class="tool" style="left:1279px;top:78px"><svg viewBox="0 0 30 30"><use href="#up"/></svg></div>
<div class="tool" style="left:1319px;top:78px"><svg viewBox="0 0 30 30"><use href="#dn"/></svg></div>
<div class="tool" style="left:1359px;top:78px"><svg viewBox="0 0 30 30"><path d="M2 15L15 4l13 11M7 13v14h16V13M10 18h4v4h-4zM17 27v-9h4v9M23 2l-1 6" fill="none" stroke="#000" stroke-width="1.600"/></svg></div>
<div class="tool" style="left:1399px;top:78px"><svg viewBox="0 0 30 30"><rect x="4" y="4" width="23" height="23" fill="none" stroke="#000" stroke-width="2.600"/><path d="M15 4v23M4 18h23" stroke="#000" stroke-width="1.600"/><path d="M18 12l5 3M23 12l-5 3" stroke="#456" stroke-width="1"/></svg></div>
<div class="tool" style="left:1279px;top:118px"><svg viewBox="0 0 30 30"><use href="#lf"/></svg></div>
<div class="tool" style="left:1319px;top:118px"><svg viewBox="0 0 30 30"><use href="#rt"/></svg></div>
<div class="tool" style="left:1359px;top:118px"><svg viewBox="0 0 30 30"><rect x="13" y="7" width="13" height="15" fill="none" stroke="#000" stroke-width="2.400"/><path d="M3 10h6a3 3 0 0 1 0 10H4" fill="none" stroke="#000" stroke-width="2.800"/><path d="M2 10l5-4v8z"/></svg></div>
<div class="tool" style="left:1399px;top:118px"><svg viewBox="0 0 30 30"><path d="M26 7H7v9h17v9H5" fill="none" stroke="#000" stroke-width="2.600"/><path d="M29 4l-4 3 4 3M1 22l4 3-4 3" fill="none" stroke="#000" stroke-width=".8"/></svg></div>
<div class="tool" style="left:1279px;top:158px"><svg viewBox="0 0 30 30"><use href="#fit"/></svg></div>
<div class="tool" style="left:1319px;top:158px"><svg viewBox="0 0 30 30"><use href="#pan"/></svg></div>
<div class="tool" style="left:1359px;top:158px"><span style="left:1px;top:1px;width:30px;text-align:center;font:bold 14px/30px 'Liberation Sans',sans-serif">1:2</span></div>
<div class="tool" style="left:1399px;top:158px"><svg viewBox="0 0 30 30"><rect x="4" y="4" width="23" height="23" fill="none" stroke="#000" stroke-width="2.600"/><text x="15.500" y="22" font-size="16" font-weight="bold" font-family="Liberation Sans" text-anchor="middle">?</text></svg></div>
<div class="tool" style="left:1279px;top:198px"><svg viewBox="0 0 30 30"><path d="M3 6h19M3 9h19" stroke="#000" stroke-width="1.500"/><path d="M21 3h6v2h-3v3h3v2h-6z"/><path d="M3 12l24 0v3H9z" fill="none" stroke="#000"/><ellipse cx="18" cy="23" rx="7" ry="5" fill="none" stroke="#000" transform="rotate(-25 18 23)"/><circle cx="17" cy="23" r="1"/></svg></div>
<div class="tool" style="left:1319px;top:198px"><svg viewBox="0 0 30 30"><path d="M1 9.500h29M1 20.500h29M10 1v29M21 1v29" stroke="#7aa8a8"/></svg></div>
<div style="left:1359px;top:198px;width:38px;height:38px;background:#9edcdc;border:3px solid #c01818"><svg style="left:1px;top:1px;width:30px;height:30px" viewBox="0 0 30 30"><path d="M11 3v9M3 15h9v10H7" fill="none" stroke="#1850d0" stroke-width="1.300"/><path d="M3 15h9v6" fill="none" stroke="#e02020"/><circle cx="11" cy="4" r="2.500" fill="#0a32ff"/><circle cx="3" cy="15" r="2.500" fill="#e01010"/><circle cx="7" cy="25" r="2.500" fill="#0a32ff"/><rect x="16" y="2" width="12" height="26" fill="none" stroke="#000"/><circle cx="22" cy="8" r="4" fill="#e01010"/><circle cx="22" cy="16" r="2.500" fill="none" stroke="#000"/><circle cx="22" cy="24" r="2.500" fill="none" stroke="#000"/></svg></div>
<div style="left:1399px;top:198px;width:38px;height:38px;background:#9edcdc;border:3px solid #c01818"><svg style="left:1px;top:1px;width:30px;height:30px" viewBox="0 0 30 30"><path d="M11 3v9M3 15h9v10H7" fill="none" stroke="#000" stroke-width="1.300"/><path d="M10 10h6M11 8v2M13 8v2M15 8v2" stroke="#e01010"/><circle cx="11" cy="4" r="2.500"/><circle cx="3" cy="15" r="2.500"/><circle cx="7" cy="25" r="2.500"/><rect x="16" y="2" width="12" height="26" fill="none" stroke="#000"/><circle cx="22" cy="8" r="4" fill="#e01010"/><circle cx="22" cy="16" r="2.500" fill="none" stroke="#000"/><circle cx="22" cy="24" r="2.500" fill="none" stroke="#000"/></svg></div>

<!-- Minimap -->
<div style="left:1276px;top:487px;width:2px;height:308px;background:#3f7a6a"></div>
<div style="left:1278px;top:487px;width:162px;height:263px;background:#000"></div>
<div style="left:1278px;top:552px;width:162px;height:1px;background:#4f9a28"></div>
<div style="left:1278px;top:682px;width:162px;height:1px;background:#4f9a28"></div>
<div style="left:1278px;top:552px;width:1px;height:131px;background:#4f9a28"></div>
<div style="left:1278px;top:606px;width:85px;height:66px;background:#f00"></div>
<div style="left:1286px;top:608px;width:39px;height:62px;border:2px solid #30e8e8;border-right-color:#909090"></div>
<svg style="left:1282px;top:664px;width:12px;height:12px"><path d="M1 1l8 8M9 1L1 9" stroke="#ddd"/></svg>
<div style="left:1277px;top:750px;width:163px;height:45px;background:#55cdb0;border-top:2px solid #a8e8d8;border-left:1px solid #3f7a6a;font:bold 14px/15px 'Liberation Mono',monospace;padding:7px 0 0 3px;white-space:pre;letter-spacing:.5px;color:#023">X = 1.601613"
Y = 3.879865"</div>

<!-- Popup 1 -->
<div class="pop" style="left:167px;top:145px;width:389px;height:571px"></div>
<div style="left:170px;top:148px;width:383px;height:18px;background:linear-gradient(90deg,#808080,#c4c4c4)"></div>
<svg style="left:173px;top:150px;width:16px;height:16px"><use href="#xi"/></svg>
<div class="ti" style="left:190px;top:149px">Popview - 1</div>
<div class="x" style="left:535px;top:149px">✕</div>
<div style="left:170px;top:166px;width:383px;height:548px;background:#55cdb0"></div>
<div style="left:172px;top:168px;width:344px;height:515px;background:#000;border:2px solid;border-color:#3f6f60 #a8e8d8 #a8e8d8 #3f6f60"></div>
<svg style="left:174px;top:170px;width:340px;height:511px" viewBox="174 170 340 511">
<g fill="#10dc10"><circle cx="290" cy="303" r="6.500"/><circle cx="373" cy="311" r="6.500"/><circle cx="459" cy="304" r="6.500"/><circle cx="284" cy="405" r="6.500"/><circle cx="334" cy="398" r="6.500"/><circle cx="388" cy="398" r="6.500"/><circle cx="495" cy="403" r="6.500"/><circle cx="308" cy="519" r="6.500"/><circle cx="362" cy="519" r="6.500"/><circle cx="416" cy="519" r="6.500"/><circle cx="469" cy="521" r="6.500"/><circle cx="308" cy="573" r="6.500"/><circle cx="362" cy="573" r="6.500"/><circle cx="416" cy="573" r="6.500"/></g>
<rect x="208" y="419" width="24" height="24" rx="4" fill="#f00"/><rect x="211" y="463" width="24" height="24" rx="4" fill="#f00"/>
<circle cx="220.500" cy="431" r="6.500" fill="#10c010"/><circle cx="223" cy="475" r="6.500" fill="#10c010"/>
<rect x="215" y="426" width="10" height="10" rx="2" fill="#ffd800"/><rect x="218" y="470" width="9" height="10" rx="2" fill="#ffd800"/>
</svg>
<div class="pb" style="left:517px;top:169px"><svg viewBox="0 0 30 30"><use href="#back"/></svg></div>
<div class="pb" style="left:517px;top:204px"><svg viewBox="0 0 30 30"><use href="#pup"/></svg></div>
<div class="pb" style="left:517px;top:239px"><svg viewBox="0 0 30 30"><use href="#pdn"/></svg></div>
<div class="pb" style="left:517px;top:274px"><svg viewBox="0 0 30 30"><use href="#plf"/></svg></div>
<div class="pb" style="left:517px;top:309px"><svg viewBox="0 0 30 30"><use href="#prt"/></svg></div>
<div class="pb" style="left:517px;top:344px"><svg viewBox="0 0 30 30"><use href="#pfit"/></svg></div>
<div class="pb" style="left:517px;top:379px"><svg viewBox="0 0 30 30"><use href="#ppan"/></svg></div>
<div style="left:171px;top:684px;width:381px;height:29px;background:#2c5a50"></div>
<div class="b" style="left:173px;top:686px;width:377px;height:25px;text-align:center;font:bold 14px/22px 'Liberation Mono',monospace">Close</div>

<!-- Popup 2 -->
<div class="pop" style="left:867px;top:273px;width:236px;height:366px"></div>
<div style="left:870px;top:276px;width:230px;height:18px;background:linear-gradient(90deg,#0a246a,#a6caf0)"></div>
<svg style="left:873px;top:278px;width:16px;height:16px"><use href="#xi"/></svg>
<div class="ti" style="left:890px;top:277px;color:#fff">Popview - 2</div>
<div class="x" style="left:1082px;top:277px">✕</div>
<div style="left:870px;top:294px;width:230px;height:342px;background:#55cdb0"></div>
<div style="left:872px;top:296px;width:191px;height:310px;background:#000;border:2px solid;border-color:#3f6f60 #a8e8d8 #a8e8d8 #3f6f60"></div>
<div style="left:875px;top:453px;width:184px;height:3px;background:#f01010"></div>
<div style="left:981px;top:368px;width:6px;height:6px;background:#f01010;border-radius:2px"></div>
<div style="left:979px;top:534px;width:11px;height:11px;border:3px solid #f01010;border-radius:2px"></div>
<div class="pb" style="left:1065px;top:298px"><svg viewBox="0 0 30 30"><use href="#back"/></svg></div>
<div class="pb" style="left:1065px;top:333px"><svg viewBox="0 0 30 30"><use href="#pup"/></svg></div>
<div class="pb" style="left:1065px;top:368px"><svg viewBox="0 0 30 30"><use href="#pdn"/></svg></div>
<div class="pb" style="left:1065px;top:403px"><svg viewBox="0 0 30 30"><use href="#plf"/></svg></div>
<div class="pb" style="left:1065px;top:438px"><svg viewBox="0 0 30 30"><use href="#prt"/></svg></div>
<div class="pb" style="left:1065px;top:473px"><svg viewBox="0 0 30 30"><use href="#pfit"/></svg></div>
<div class="pb" style="left:1065px;top:508px"><svg viewBox="0 0 30 30"><use href="#ppan"/></svg></div>
<div style="left:871px;top:607px;width:229px;height:29px;background:#2c5a50"></div>
<div class="b" style="left:873px;top:609px;width:225px;height:25px;text-align:center;font:bold 14px/23px 'Liberation Mono',monospace">Close</div>

<!-- Measure popup -->
<div class="pop" style="left:1253px;top:241px;width:187px;height:247px"></div>
<div style="left:1256px;top:244px;width:184px;height:20px;background:linear-gradient(90deg,#808080,#c4c4c4)"></div>
<svg style="left:1258px;top:248px;width:15px;height:15px"><use href="#xi"/></svg>
<div class="ti" style="left:1275px;top:247px">Measure Popup</div>
<div class="x" style="left:1422px;top:246px">✕</div>
<div style="left:1257px;top:264px;width:183px;height:222px;background:#55cdb0"></div>
<div style="left:1257px;top:264px;width:183px;height:162px;background:#000"></div>
<div style="left:1258px;top:265px;width:181px;height:15px;background:#9edcdc;text-align:center;font:bold 14.5px/17px 'Liberation Mono',monospace;overflow:hidden">Measure Mode</div>
<div class="row" style="top:281px"><svg viewBox="0 0 15 15"><use href="#dia"/></svg><span class="t">Between Points</span></div>
<div class="row" style="top:310px"><svg viewBox="0 0 15 15"><use href="#dia"/></svg><span class="t">Between Contours</span></div>
<div class="row" style="top:339px"><svg viewBox="0 0 15 15"><use href="#dia"/></svg><span class="t">Between Nets</span></div>
<div class="row" style="top:368px"><svg viewBox="0 0 15 15"><path d="M1 7.500L7.500 1 14 7.500z" fill="#3f6060"/><path d="M1 7.500L7.500 14 14 7.500z" fill="#d4f4f4"/><path d="M7.500 3l4.500 4.500-4.500 4.500L3 7.500z" fill="#d00050"/></svg><span class="t">Annular Ring</span></div>
<div class="row" style="top:397px"><svg viewBox="0 0 15 15"><use href="#dia"/></svg><span class="t">Between Midpoints</span></div>
<div style="left:1256px;top:457px;width:184px;height:29px;background:#2c5a50"></div>
<div class="b" style="left:1258px;top:459px;width:181px;height:25px;text-align:center;font:bold 14px/22px 'Liberation Mono',monospace">Close</div>

<!-- Arrows -->
<svg style="left:0;top:0;width:1440px;height:865px" viewBox="0 0 1440 865">
<g stroke="#7f10f0" fill="none" stroke-width="5">
<path d="M736 250L360 378M700 304L268 470M1050 254L1145 362"/>
<path d="M988 279L1120 408" stroke-width="6"/>
</g>
<g fill="#7f10f0">
<path d="M338 383L358 369L365 384Z"/>
<path d="M244 479L265 463L271 478Z"/>
<path d="M1152 372L1139 347L1130 357Z"/>
<path d="M1129 417L1113 395L1105 405Z"/>
</g>
</svg>

<!-- Note -->
<div style="left:734px;top:138px;width:319px;height:144px;background:#fff;border:3px solid #0000d8;font:13px/13px 'WenQuanYi Zen Hei','Noto Sans CJK SC',sans-serif;color:#d010d0;padding:5px 4px 0 4px;overflow:hidden;white-space:nowrap">把客户提供的不一样的孔径合到一起去了，请分开来<br>制作</div>

<!-- Bottom bar -->
<div style="left:0;top:795px;width:1440px;height:35px;background:#000"></div>
<div style="left:0;top:797px;width:1440px;height:32px;background:#ffffd5"></div>
<div style="left:30px;top:797px;width:2px;height:31px;background:#000"></div>
<div style="left:2px;top:798px;width:27px;height:29px;border:2px solid #cfcfa8"></div>
<svg style="left:7px;top:802px;width:21px;height:21px"><rect x="1" y="1" width="19" height="19" fill="none" stroke="#000" stroke-width="1.500"/><path d="M5 5l11 11M5 5h4M5 5v4M16 16h-4M16 16v-4" fill="none" stroke="#000"/></svg>
<div style="left:34px;top:798px;width:29px;height:29px;border:2px solid #cfcfa8"></div>
<svg style="left:38px;top:802px;width:21px;height:21px"><rect x="1" y="1" width="19" height="19" fill="none" stroke="#000" stroke-width="1.500"/><path d="M3 18L18 4M3 18h15M7 8v4h4" fill="none" stroke="#000"/></svg>
<div style="left:64px;top:797px;width:1px;height:31px;background:#000"></div>
<div style="left:65px;top:797px;width:29px;height:31px;border:4px solid #5f9f8f;background:#ffffd5"></div>
<svg style="left:70px;top:803px;width:19px;height:19px"><rect x="1" y="1" width="17" height="17" fill="none" stroke="#000" stroke-width="1.500"/><path d="M9 1v17M1 9h17M9 1L1 9" stroke="#000" fill="none"/></svg>
<div style="left:98px;top:805px;font:bold 13px/15px 'Liberation Mono',monospace;white-space:pre">X Y :</div>
<div style="left:143px;top:797px;width:1px;height:31px;background:#e8e8c0"></div>
<div style="left:145px;top:799px;width:170px;height:27px;border:2px solid #b4b48c;background:#ffffd5"></div>
<div style="left:152px;top:804px;width:1px;height:13px;border-left:1px dotted #333"></div>
<div style="left:316px;top:797px;width:1px;height:31px;background:#000"></div>
<div style="left:318px;top:797px;width:29px;height:31px;border:4px solid #5f9f8f;background:#ffffd5"></div>
<div style="left:323px;top:803px;width:19px;height:19px;border:1px solid #000;text-align:center;font:bold 14px/17px 'Liberation Sans',sans-serif">!</div>
<div style="left:348px;top:797px;width:1px;height:31px;background:#000"></div>
<div style="left:352px;top:806px;font:bold 11.6px/15px 'Liberation Mono',monospace;white-space:pre">&lt;M1&gt; - Select first area corner</div>
<div style="left:1359px;top:797px;width:2px;height:32px;background:#000"></div>
<div style="left:1361px;top:797px;width:79px;height:31px;background:#55cdb0"></div>
<div style="left:1368px;top:798px;width:68px;height:27px;background:#55cdb0;border:2px solid;border-color:#a8e8d8 #2f7060 #2f7060 #a8e8d8"></div>
<div style="left:1373px;top:806px;font:bold 14.5px/15px 'Liberation Mono',monospace">Inch</div>
<div style="left:1417px;top:810px;width:13px;height:6px;background:#9edcdc;border:1px solid;border-color:#d3f5f5 #3c6d60 #3c6d60 #d3f5f5"></div>

<!-- Status -->
<div style="left:0;top:830px;width:1440px;height:30px;background:#000"></div>
<div style="left:2px;top:832px;width:1436px;height:26px;background:#b0ffff;border:2px solid;border-color:#dcffff #5f9f9f #5f9f9f #dcffff;text-align:center;font:bold 11.5px/24px 'Liberation Mono',monospace">424 r8 Pads were selected</div>
<div style="left:0;top:860px;width:1440px;height:3px;background:#d4d0c8"></div>
<div style="left:0;top:863px;width:1440px;height:2px;background:#555"></div>
</div>
</body></html>
